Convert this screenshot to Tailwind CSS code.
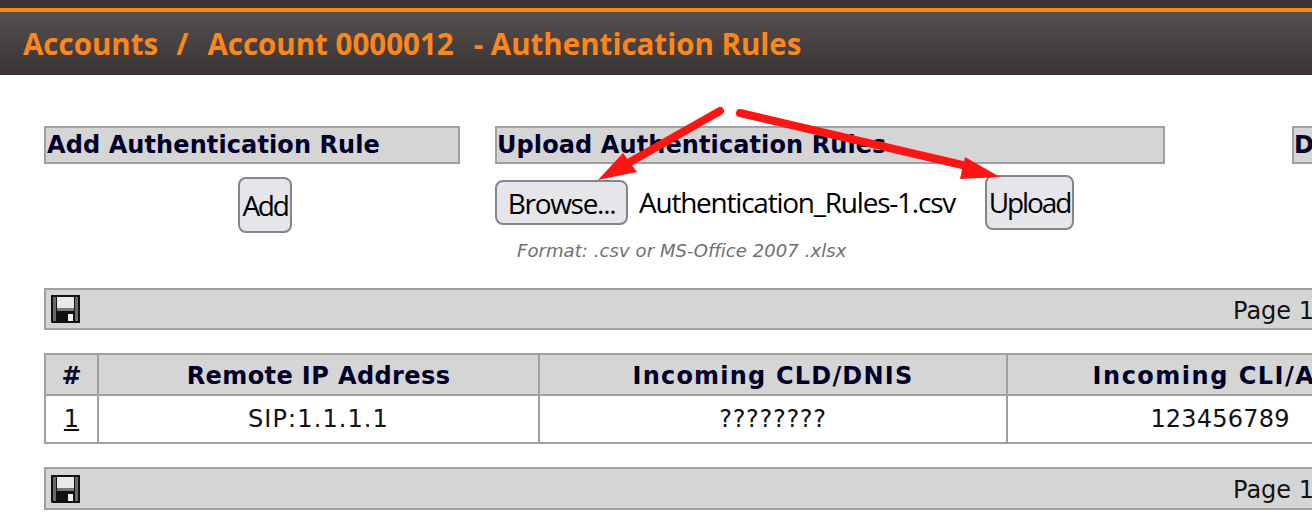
<!DOCTYPE html>
<html lang="en">
<head>
    <meta charset="UTF-8">
    <title>Authentication Rules</title>
    <script src="https://cdn.jsdelivr.net/npm/@tailwindcss/browser@4"></script>
</head>
<body class="relative h-[516px] w-[1312px] overflow-hidden bg-white font-['DejaVu_Sans',sans-serif] text-[#000]">
    <!-- cabecera -->
    <div class="h-[8px] bg-[#3a3635]"></div>
    <div class="h-[4px] bg-[#ff8719]"></div>
    <header class="flex h-[63px] items-center whitespace-nowrap bg-gradient-to-b from-[#565050] to-[#383433] pl-[23px] pt-[2px] font-['Open_Sans',sans-serif] text-[29.5px] font-bold text-[#ff8719]">
        <span>Accounts</span>
        <span class="ml-[18px] mr-[19px]">/</span>
        <span>Account 0000012</span>
        <span class="ml-[20px]">- Authentication Rules</span>
    </header>

    <main class="w-[1500px] pl-[44px] pt-[51px]">
        <!-- formularios -->
        <div class="flex h-[162px] items-start">
            <section class="w-[416px] shrink-0">
                <h2 class="h-[38px] border-2 border-[#a0a0a0] bg-[#d5d5d5] pl-[1px] pt-[1px] text-[24px] font-bold leading-[33px] tracking-[0.1px] text-[#00002a]">Add Authentication Rule</h2>
                <div class="flex justify-center pl-[26px] pt-[13px]">
                    <button class="h-[56px] w-[54px] rounded-[8px] border-2 border-[#85858f] bg-[#e5e5ea] font-['Open_Sans',sans-serif] text-[28px] tracking-[-2.3px]">Add</button>
                </div>
            </section>
            <section class="ml-[35px] w-[670px] shrink-0">
                <h2 class="h-[38px] border-2 border-[#a0a0a0] bg-[#d5d5d5] pt-[1px] text-[24px] font-bold leading-[33px] tracking-[0.1px] text-[#00002a]">Upload Authentication Rules</h2>
                <div class="flex items-start pt-[11px] font-['Open_Sans',sans-serif] text-[28px] tracking-[-1.23px]">
                    <button class="mt-[5px] h-[45px] w-[133px] rounded-[8px] border-2 border-[#85858f] bg-[#e5e5ea] pb-[2px] tracking-[-1.3px]">Browse...</button>
                    <span class="ml-[11px] mt-[7px] leading-[40px]">Authentication_Rules-1.csv</span>
                    <button class="ml-[30px] h-[55px] w-[89px] rounded-[8px] border-2 border-[#85858f] bg-[#e5e5ea] pb-[2px] tracking-[-2.1px]">Upload</button>
                </div>
                <p class="pl-[22px] pt-[8px] text-[18px] italic leading-[26px] tracking-[0.08px] text-[#6f6f6f]">Format: .csv or MS-Office 2007 .xlsx</p>
            </section>
            <section class="ml-[127px] w-[300px] shrink-0">
                <h2 class="h-[38px] border-2 border-[#a0a0a0] bg-[#d5d5d5] pt-[1px] text-[24px] font-bold leading-[33px] text-[#00002a]">Download</h2>
            </section>
        </div>

        <!-- barra superior -->
        <div class="flex h-[42px] w-[1400px] items-center border-2 border-[#a0a0a0] bg-[#d5d5d5] pl-[5px]">
            <svg class="h-[28px] w-[29px] shrink-0" viewBox="0 0 29 28">
                <path fill="#111" d="M0 0h29v28H1l-1-1z"/>
                <path fill="#6a6a6a" d="M2 2h3v24H2zM24 2h3v24h-3z"/>
                <path fill="#e8e8e8" d="M6 2h17v11H6z"/>
                <path fill="#777" d="M6 13h17v3H6z"/>
                <path fill="#f0f0f0" d="M17 19h5v7h-5z"/>
            </svg>
            <span class="ml-[1153px] pt-[3px] text-[24px] text-[#111]">Page 1</span>
        </div>

        <!-- tabla -->
        <table class="mt-[23px] w-[1390px] table-fixed border-collapse text-center text-[24px]">
            <colgroup>
                <col class="w-[53px]">
                <col class="w-[441px]">
                <col class="w-[468px]">
                <col>
            </colgroup>
            <thead>
                <tr class="h-[41px] bg-[#d5d5d5] font-bold text-[#00002a]">
                    <th class="border-2 border-[#a0a0a0] pt-[2px]">#</th>
                    <th class="border-2 border-[#a0a0a0] pt-[2px] tracking-[0.4px]">Remote IP Address</th>
                    <th class="border-2 border-[#a0a0a0] pt-[2px] tracking-[1.2px]">Incoming CLD/DNIS</th>
                    <th class="border-2 border-[#a0a0a0] pt-[2px] tracking-[1.5px]">Incoming CLI/ANI</th>
                </tr>
            </thead>
            <tbody>
                <tr class="h-[48px] text-[#111]">
                    <td class="border-2 border-[#a0a0a0] underline">1</td>
                    <td class="border-2 border-[#a0a0a0] tracking-[1.1px]">SIP:1.1.1.1</td>
                    <td class="border-2 border-[#a0a0a0] tracking-[0.7px]">????????</td>
                    <td class="border-2 border-[#a0a0a0] tracking-[0.2px]">123456789</td>
                </tr>
            </tbody>
        </table>

        <!-- barra inferior -->
        <div class="mt-[23px] flex h-[43px] w-[1400px] items-center border-2 border-[#a0a0a0] bg-[#d5d5d5] pl-[5px]">
            <svg class="h-[28px] w-[29px] shrink-0" viewBox="0 0 29 28">
                <path fill="#111" d="M0 0h29v28H1l-1-1z"/>
                <path fill="#6a6a6a" d="M2 2h3v24H2zM24 2h3v24h-3z"/>
                <path fill="#e8e8e8" d="M6 2h17v11H6z"/>
                <path fill="#777" d="M6 13h17v3H6z"/>
                <path fill="#f0f0f0" d="M17 19h5v7h-5z"/>
            </svg>
            <span class="ml-[1153px] pt-[3px] text-[24px] text-[#111]">Page 1</span>
        </div>
    </main>

    <!-- flechas rojas sobre la captura -->
    <svg class="pointer-events-none absolute left-0 top-0 h-[516px] w-[1312px]" viewBox="0 0 1312 516">
        <path d="M720 111 L630 162" stroke="#ff1414" stroke-width="8" stroke-linecap="round" fill="none"/>
        <path d="M598 180 L623 153 L637 172 Z" fill="#ff1414"/>
        <path d="M740 113 L975 168" stroke="#ff1414" stroke-width="8" stroke-linecap="round" fill="none"/>
        <path d="M1000 177 L965 157 L960 179 Z" fill="#ff1414"/>
    </svg>
</body>
</html>
